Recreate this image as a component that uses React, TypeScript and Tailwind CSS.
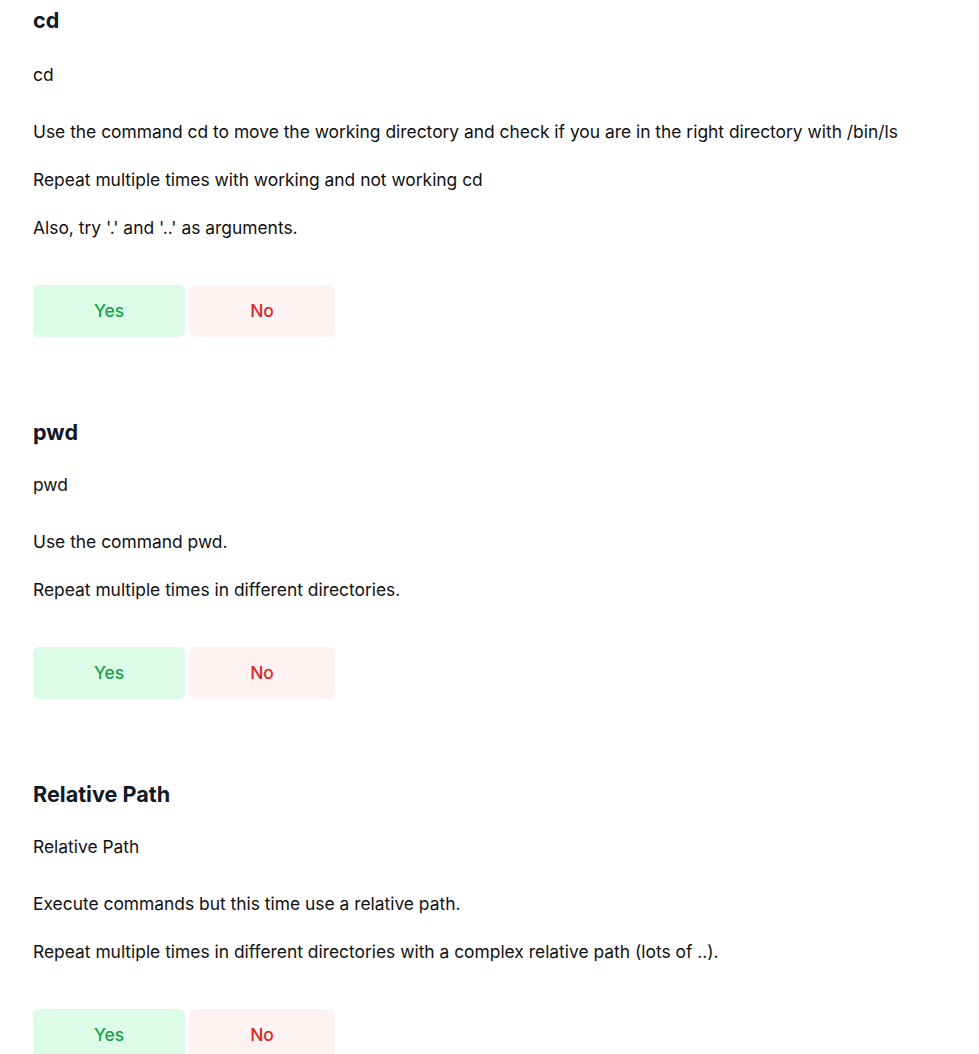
import React from "react";

type Item = {
  title: string;
  subtitle: string;
  lines: string[];
};

const ITEMS: Item[] = [
  {
    title: "cd",
    subtitle: "cd",
    lines: [
      "Use the command cd to move the working directory and check if you are in the right directory with /bin/ls",
      "Repeat multiple times with working and not working cd",
      "Also, try '.' and '..' as arguments."
    ]
  },
  {
    title: "pwd",
    subtitle: "pwd",
    lines: ["Use the command pwd.", "Repeat multiple times in different directories."]
  },
  {
    title: "Relative Path",
    subtitle: "Relative Path",
    lines: [
      "Execute commands but this time use a relative path.",
      "Repeat multiple times in different directories with a complex relative path (lots of ..)."
    ]
  }
];

const Section = ({ title, subtitle, lines, first }: Item & { first: boolean }) => (
  <div className="mb-[81px]">
    <h2
      className={
        first
          ? "text-[21.6px] leading-7 font-bold text-[#111827] mb-[29px]"
          : "text-[21.6px] leading-7 font-bold text-[#111827] mb-[27px]"
      }
    >
      {title}
    </h2>
    <p className="text-[17.4px] leading-6 text-[#111111] mb-[33px]">{subtitle}</p>
    <div className="flex flex-col gap-6">
      {lines.map((l) => (
        <p key={l} className="text-[17.4px] leading-6 text-[#111111]">
          {l}
        </p>
      ))}
    </div>
    <div className="mt-[45px] flex flex-row gap-1">
      <button className="w-[152px] h-[52px] rounded-md bg-[#dcfce7] text-[#16a34a] text-[17.4px] font-medium">
        Yes
      </button>
      <button className="w-[146px] h-[52px] rounded-md bg-[#fef2f2] text-[#dc2626] text-[17.4px] font-medium">
        No
      </button>
    </div>
  </div>
);

export default function App() {
  return (
    <div
      className="min-h-screen bg-white px-[33px] pt-[6px]"
      style={{ fontFamily: "Inter, 'Noto Sans', sans-serif" }}
    >
      {ITEMS.map((it, i) => (
        <Section key={it.title} {...it} first={i === 0} />
      ))}
    </div>
  );
}
